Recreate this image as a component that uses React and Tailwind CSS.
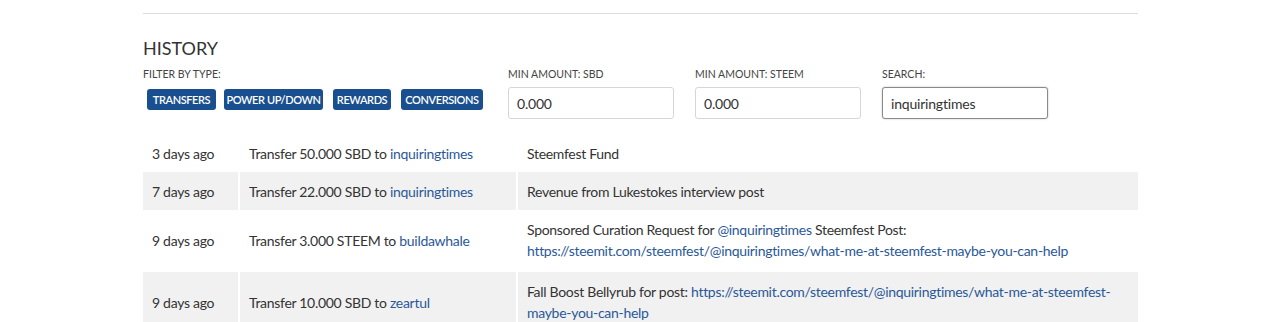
const rows = [
  {
    when: '3 days ago',
    what: 'Transfer 50.000 SBD to ',
    to: 'inquiringtimes',
    memo: <>Steemfest Fund</>,
  },
  {
    when: '7 days ago',
    what: 'Transfer 22.000 SBD to ',
    to: 'inquiringtimes',
    memo: <>Revenue from Lukestokes interview post</>,
  },
  {
    when: '9 days ago',
    what: 'Transfer 3.000 STEEM to ',
    to: 'buildawhale',
    tall: true,
    memo: (
      <>
        Sponsored Curation Request for <a className="text-[#2a5898]">@inquiringtimes</a> Steemfest Post:{' '}
        <a className="text-[#2a5898]">https://steemit.com/steemfest/@inquiringtimes/what-me-at-steemfest-maybe-you-can-help</a>
      </>
    ),
  },
  {
    when: '9 days ago',
    what: 'Transfer 10.000 SBD to ',
    to: 'zeartul',
    tall: true,
    memo: (
      <>
        Fall Boost Bellyrub for post:{' '}
        <a className="text-[#2a5898]">https://steemit.com/steemfest/@inquiringtimes/what-me-at-steemfest-maybe-you-can-help</a>
      </>
    ),
  },
]

const filters = [
  { label: 'Transfers', w: 'w-[69px]' },
  { label: 'Power Up/Down', w: 'w-[99px] ml-[8px]' },
  { label: 'Rewards', w: 'w-[58px] ml-[10px]' },
  { label: 'Conversions', w: 'w-[82px] ml-[10px]' },
]

export default function App() {
  return (
    <div className="bg-white min-h-[322px] font-['Lato','Open_Sans',sans-serif] text-[#333]">
      <div className="w-[995px] ml-[143px]">
        <div className="pt-[13px] border-b border-[#dcdcdc]" />

        <h2 className="mt-[23px] text-[18px] leading-[22px] text-[#333]">HISTORY</h2>

        {/* Filters */}
        <div className="flex mt-[8px]">
          <div className="w-[365px]">
            <div className="text-[10.5px] leading-[14px] text-[#444] uppercase">Filter by type:</div>
            <div className="flex mt-[8px] ml-[4px]">
              {filters.map(f => (
                <button
                  key={f.label}
                  className={`${f.w} h-[21px] rounded-[3px] bg-[#1a4f8f] text-white text-[11px] font-semibold tracking-[-0.4px] uppercase leading-[21px] text-center whitespace-nowrap`}
                >
                  {f.label}
                </button>
              ))}
            </div>
          </div>

          <div className="flex gap-[21px]">
            {[
              { label: 'Min amount: SBD', value: '0.000' },
              { label: 'Min amount: STEEM', value: '0.000' },
              { label: 'Search:', value: 'inquiringtimes', focus: true },
            ].map(i => (
              <div key={i.label} className="w-[166px]">
                <div className="text-[10.5px] leading-[14px] text-[#444] uppercase">{i.label}</div>
                <input
                  readOnly
                  value={i.value}
                  className={`mt-[6px] w-full h-[32px] px-[8px] rounded-[3px] border bg-white text-[14px] tracking-[-0.2px] text-[#333] outline-none ${
                    i.focus ? 'border-[#8a8a8a] shadow-[0_0_2px_#bbb]' : 'border-[#d6d6d6]'
                  }`}
                />
              </div>
            ))}
          </div>
        </div>

        {/* Table */}
        <table className="mt-[15px] w-full border-collapse text-[14px] tracking-[-0.3px] leading-[21px]">
          <tbody>
            {rows.map((r, idx) => {
              const pad = r.tall ? 'pt-[9px] pb-[11px]' : 'py-[8.5px]'
              return (
                <tr key={idx} className={idx % 2 ? 'bg-[#f1f1f1]' : 'bg-white'}>
                  <td className={`w-[96px] px-[9px] ${pad} border-r-2 border-white whitespace-nowrap align-middle`}>
                    {r.when}
                  </td>
                  <td className={`w-[278px] px-[9px] ${pad} border-r-2 border-white whitespace-nowrap align-middle`}>
                    {r.what}
                    <a className="text-[#2a5898]">{r.to}</a>
                  </td>
                  <td className={`px-[9px] ${pad} align-middle`}>{r.memo}</td>
                </tr>
              )
            })}
          </tbody>
        </table>
      </div>
    </div>
  )
}
